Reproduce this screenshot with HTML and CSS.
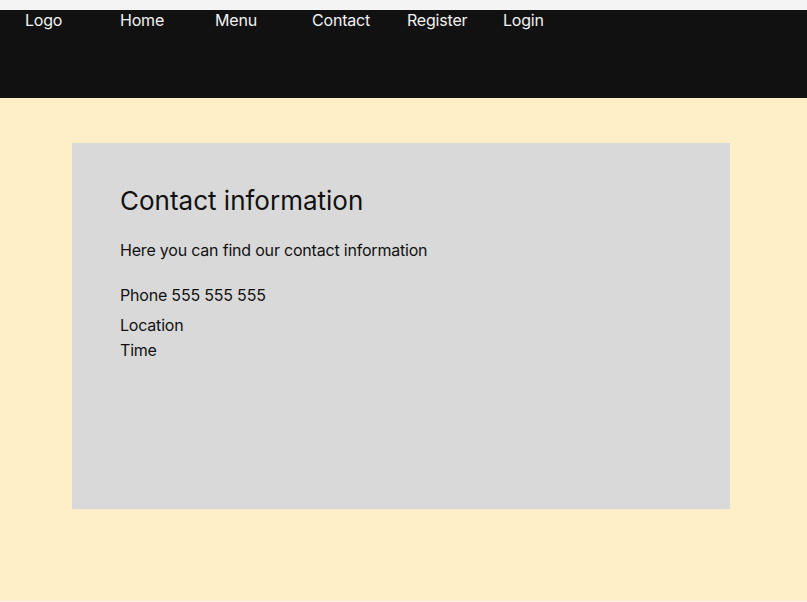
FILE: index.html
```html
<!DOCTYPE html>
<html>
<head>
<meta charset="utf-8">
<link rel="stylesheet" href="styles.css">
</head>
<body>
<header class="header">
  <nav class="nav">
    <a class="nav-item w95">Logo</a>
    <a class="nav-item w95">Home</a>
    <a class="nav-item w97">Menu</a>
    <a class="nav-item w95">Contact</a>
    <a class="nav-item w96">Register</a>
    <a class="nav-item">Login</a>
  </nav>
</header>
<main class="main">
  <section class="card">
    <h1 class="title">Contact information</h1>
    <p class="intro">Here you can find our contact information</p>
    <p class="phone">Phone 555 555 555</p>
    <p class="location">Location</p>
    <p class="time">Time</p>
  </section>
</main>
</body>
</html>
```
FILE: styles.css
```css
html, body {
  margin: 0;
  padding: 0;
}
body {
  background: #f4f4f4;
  padding-top: 10px;
  height: 602px;
  box-sizing: border-box;
  font-family: Inter, "Liberation Sans", sans-serif;
  overflow: hidden;
}
.header {
  background: #111111;
  height: 88px;
}
.nav {
  display: flex;
  padding-left: 25px;
  padding-top: 1px;
}
.nav-item {
  color: #f2f2f2;
  font-size: 16px;
  line-height: 19px;
  letter-spacing: -0.2px;
  text-decoration: none;
}
.w95 { width: 95px; }
.w96 { width: 96px; }
.w97 { width: 97px; }
.main {
  background: #ffefc9;
  height: 503px;
  padding-top: 45px;
  box-sizing: border-box;
}
.card {
  background: #d9d9d9;
  margin-left: 72px;
  width: 658px;
  height: 366px;
  box-sizing: border-box;
  padding: 42px 48px 0;
  color: #111;
}
.title {
  margin: 0;
  font-size: 26px;
  font-weight: 400;
  line-height: 31.2px;
}
.card p {
  margin: 0;
  font-size: 16px;
  line-height: 19.2px;
  letter-spacing: -0.2px;
}
.card .intro { margin-top: 24.4px; }
.card .phone { margin-top: 26.5px; }
.card .location { margin-top: 10.6px; }
.card .time { margin-top: 5.3px; }
```
